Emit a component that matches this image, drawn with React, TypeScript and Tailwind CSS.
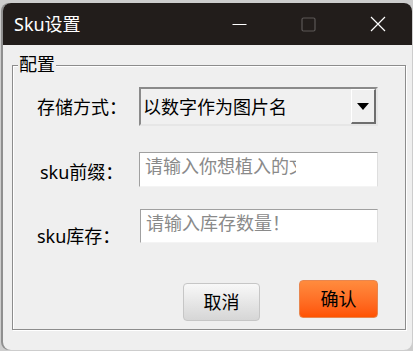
export default function App() {
  const font = { fontFamily: '"Noto Sans", "Noto Sans CJK SC", sans-serif' };
  return (
    <div className="w-[413px] h-[351px] bg-[#cdcdcd] pt-[3px] pl-[3px] overflow-hidden" style={font}>
      <div className="w-[409px] h-[347px] rounded-[8px] overflow-hidden flex flex-col bg-[#efefef] shadow-[-2px_0_0_#8f8f8f]">
        {/* Title bar */}
        <div className="h-[42px] bg-[#221d1b] flex items-center shrink-0">
          <div className="flex-1 pl-[11px] text-white text-[18px] leading-none">Sku设置</div>
          <div className="w-[69px] h-full flex items-center justify-center">
            <svg width="15" height="15" viewBox="0 0 15 15">
              <line x1="0.5" y1="7.5" x2="14.5" y2="7.5" stroke="#ffffff" strokeWidth="1.2" />
            </svg>
          </div>
          <div className="w-[69px] h-full flex items-center justify-center">
            <svg width="15" height="15" viewBox="0 0 15 15">
              <rect x="1" y="1" width="13" height="13" rx="1.5" fill="none" stroke="#5c5857" strokeWidth="1.2" />
            </svg>
          </div>
          <div className="w-[69px] h-full flex items-center justify-center">
            <svg width="16" height="16" viewBox="0 0 16 16">
              <path d="M1 1 L15 15 M15 1 L1 15" stroke="#ffffff" strokeWidth="1.2" />
            </svg>
          </div>
        </div>
        {/* Body */}
        <div className="flex-1 pt-[20px] pl-[9px] pr-[6px] pb-[20px]">
          <div className="relative h-full border border-[#8c8c8c] shadow-[inset_1px_1px_0_#ffffff,1px_1px_0_#ffffff] text-[18px] text-black">
            <span className="absolute left-[5px] top-[-12px] px-[1px] bg-[#efefef] leading-[20px]">配置</span>

            {/* Row 1 */}
            <div className="mt-[21px] flex items-center">
              <div className="w-[126px] pl-[24px] leading-[24px] whitespace-nowrap">存储方式：</div>
              <div className="w-[239px] h-[39px] border-2 border-t-[#8a8a8a] border-l-[#8a8a8a] border-r-[#e6e6e6] border-b-[#e6e6e6] bg-[#f0f0f0] flex items-stretch">
                <div className="flex-1 pl-[2px] flex items-center leading-[24px] whitespace-nowrap">以数字作为图片名</div>
                <div className="w-[25px] border-l border-t border-l-white border-t-white border-r-2 border-b-2 border-r-[#6e6e6e] border-b-[#6e6e6e] bg-[#f0f0f0] flex items-center justify-center">
                  <svg width="12" height="7" viewBox="0 0 12 7">
                    <path d="M0 0 H12 L6 7 Z" fill="#000000" />
                  </svg>
                </div>
              </div>
            </div>

            {/* Row 2 */}
            <div className="mt-[26px] flex items-center">
              <div className="w-[126px] pl-[27px] leading-[24px] pt-[5px] whitespace-nowrap">sku前缀：</div>
              <div className="w-[239px] h-[35px] bg-white border border-t-[#a0a0a0] border-l-[#a0a0a0] border-r-[#dedede] border-b-[#f4f4f4] pl-[5px] pt-[1px]">
                <span className="block w-[151px] overflow-hidden whitespace-nowrap leading-[24px] text-[#8a8a8a]">请输入你想植入的文字</span>
              </div>
            </div>

            {/* Row 3 */}
            <div className="mt-[22px] flex items-end">
              <div className="w-[126px] pl-[24px] leading-[24px] mb-[-5px] whitespace-nowrap">sku库存：</div>
              <div className="ml-[1px] w-[238px] h-[34px] bg-white border border-t-[#a0a0a0] border-l-[#a0a0a0] border-r-[#dedede] border-b-[#f4f4f4] pl-[5px] pt-[1px]">
                <span className="block whitespace-nowrap leading-[24px] text-[#8a8a8a]">请输入库存数量！</span>
              </div>
            </div>

            {/* Buttons */}
            <div className="mt-[37px] flex items-start">
              <div className="ml-[170px] mt-[3px] w-[77px] h-[38px] rounded-[4px] border border-[#c6c6c6] bg-gradient-to-b from-[#f8f8f8] to-[#d6d6d6] flex items-center justify-center leading-none">取消</div>
              <div className="ml-[39px] w-[79px] h-[38px] rounded-[4px] border border-[#e8864f] bg-gradient-to-b from-[#ff8b3d] to-[#ff5200] flex items-center justify-center leading-none">确认</div>
            </div>
          </div>
        </div>
      </div>
    </div>
  );
}
